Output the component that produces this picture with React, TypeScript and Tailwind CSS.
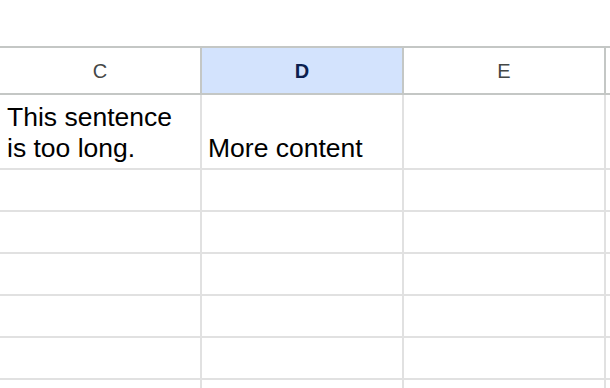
const cols = ['C', 'D', 'E', '']

export default function App() {
  return (
    <div
      className="h-[388px] w-[610px] overflow-hidden bg-white pt-[46px] text-black"
      style={{ fontFamily: '"Liberation Sans", Arial, sans-serif' }}
    >
      <div className="flex border-y-2 border-[#c4c7c5]">
        {cols.map((c, i) => (
          <div
            key={i}
            className={`flex h-[45px] w-[202px] shrink-0 items-center justify-center border-r-2 border-[#c4c7c5] text-[20px] ${
              c === 'D' ? 'bg-[#d3e3fd] font-bold text-[#0b1f4f]' : 'text-[#444746]'
            }`}
          >
            {c}
          </div>
        ))}
      </div>

      <div className="flex border-b-2 border-[#e1e1e1]">
        <div className="flex h-[73px] w-[202px] shrink-0 items-end border-r-2 border-[#e1e1e1] pb-1 pl-[7px] text-[26.5px] leading-[31px]">
          <div>
            This sentence
            <br />
            is too long.
          </div>
        </div>
        <div className="flex h-[73px] w-[202px] shrink-0 items-end border-r-2 border-[#e1e1e1] pb-1 pl-[6px] text-[26.5px] leading-[31px]">
          More content
        </div>
        <div className="h-[73px] w-[202px] shrink-0 border-r-2 border-[#e1e1e1]" />
        <div className="h-[73px] w-[202px] shrink-0 border-r-2 border-[#e1e1e1]" />
      </div>

      {[0, 1, 2, 3, 4, 5].map((r) => (
        <div key={r} className="flex border-b-2 border-[#e1e1e1]">
          {cols.map((_, i) => (
            <div key={i} className="h-[40px] w-[202px] shrink-0 border-r-2 border-[#e1e1e1]" />
          ))}
        </div>
      ))}
    </div>
  )
}
